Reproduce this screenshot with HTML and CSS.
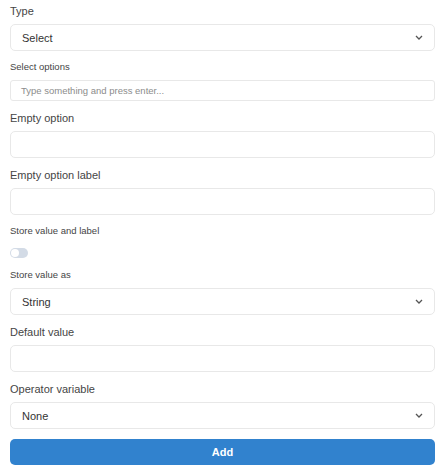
FILE: index.html
```html
<!DOCTYPE html>
<html lang="en">
<head>
<meta charset="utf-8">
<title>Field settings</title>
<link rel="stylesheet" href="styles.css">
</head>
<body>
<form class="form">
  <div class="field">
    <div class="label">Type</div>
    <div class="control select"><span>Select</span><svg class="chev" width="8" height="5" viewBox="0 0 8 5"><polyline points="1,1 4,4 7,1" fill="none" stroke="#555" stroke-width="1.3"/></svg></div>
  </div>
  <div class="field">
    <div class="label sm">Select options</div>
    <div class="control small"><span class="placeholder">Type something and press enter...</span></div>
  </div>
  <div class="field">
    <div class="label">Empty option</div>
    <div class="control"></div>
  </div>
  <div class="field">
    <div class="label">Empty option label</div>
    <div class="control"></div>
  </div>
  <div class="field">
    <div class="label sm">Store value and label</div>
    <div class="toggle"><span class="knob"></span></div>
  </div>
  <div class="field">
    <div class="label sm">Store value as</div>
    <div class="control select"><span>String</span><svg class="chev" width="8" height="5" viewBox="0 0 8 5"><polyline points="1,1 4,4 7,1" fill="none" stroke="#555" stroke-width="1.3"/></svg></div>
  </div>
  <div class="field">
    <div class="label">Default value</div>
    <div class="control"></div>
  </div>
  <div class="field">
    <div class="label">Operator variable</div>
    <div class="control select"><span>None</span><svg class="chev" width="8" height="5" viewBox="0 0 8 5"><polyline points="1,1 4,4 7,1" fill="none" stroke="#555" stroke-width="1.3"/></svg></div>
  </div>
  <div class="button">Add</div>
</form>
</body>
</html>
```
FILE: styles.css
```css
html, body {
  margin: 0;
  padding: 0;
  background: #ffffff;
}
body {
  font-family: "Liberation Sans", Arial, sans-serif;
  padding: 4px 12px 0 10px;
}
.form {
  display: flex;
  flex-direction: column;
  width: 425px;
}
.field {
  display: flex;
  flex-direction: column;
  margin-bottom: 10px;
}
.label {
  font-size: 11px;
  line-height: 14px;
  color: #454545;
  margin-bottom: 6px;
}
.label.sm {
  font-size: 9.5px;
  line-height: 12px;
  margin-bottom: 7px;
}
.control {
  box-sizing: border-box;
  height: 27px;
  border: 1px solid #e8e8e8;
  border-radius: 5px;
  background: #fff;
  display: flex;
  align-items: center;
  padding: 0 11px 0 11px;
  font-size: 11px;
  color: #333;
}
.control.small {
  height: 21px;
  border-radius: 3px;
  padding-left: 10px;
}
.select {
  justify-content: space-between;
}
.chev {
  display: block;
}
.placeholder {
  font-size: 9.5px;
  color: #8c8c8c;
}
.toggle {
  width: 18px;
  height: 10px;
  border-radius: 5px;
  background: #d3dbe6;
  margin-top: 4px;
  margin-bottom: 1px;
  display: flex;
  align-items: center;
  padding-left: 1px;
  box-sizing: border-box;
}
.knob {
  width: 8px;
  height: 8px;
  border-radius: 50%;
  background: #fff;
}
.button {
  height: 26px;
  border-radius: 5px;
  background: #3182ce;
  color: #fff;
  font-weight: bold;
  font-size: 11px;
  display: flex;
  align-items: center;
  justify-content: center;
}
```
